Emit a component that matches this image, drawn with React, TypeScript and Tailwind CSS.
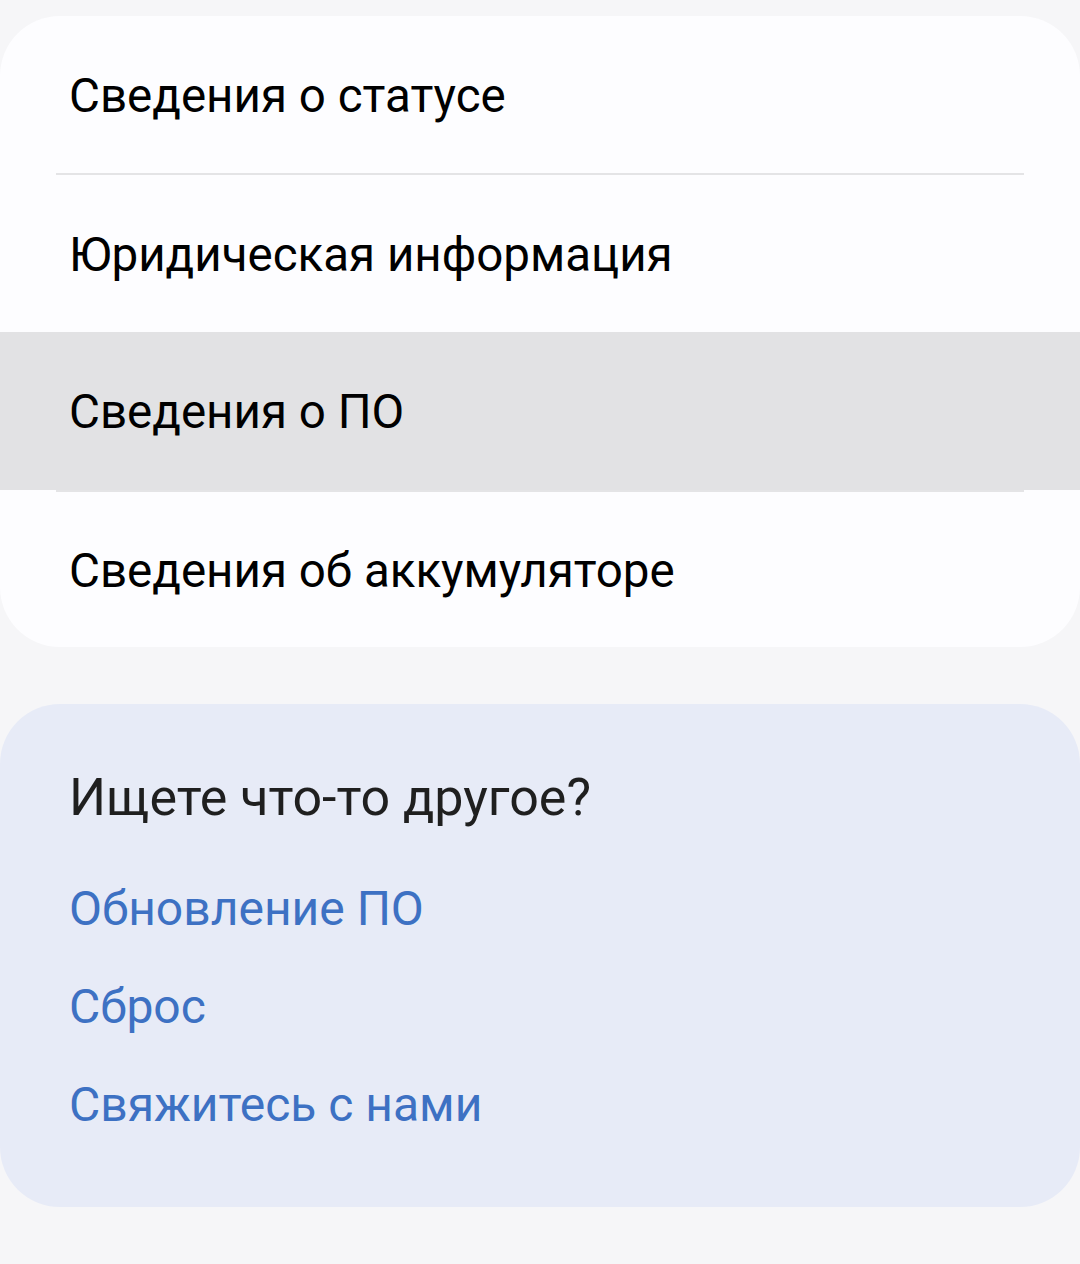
const rows = [
  "Сведения о статусе",
  "Юридическая информация",
  "Сведения о ПО",
  "Сведения об аккумуляторе",
];

const links = ["Обновление ПО", "Сброс", "Свяжитесь с нами"];

export default function App() {
  return (
    <div
      className="min-h-[1264px] w-[1080px] bg-[#f6f6f8] pt-4"
      style={{ fontFamily: "Roboto, 'Noto Sans', sans-serif" }}
    >
      <div className="overflow-hidden rounded-[60px] bg-[#fdfdff]">
        {rows.map((label, idx) => (
          <div key={idx}>
            {idx > 0 && idx !== 2 && (
              <div className="mx-14 h-[2px] bg-[#e4e4e6]" />
            )}
            <div
              className={
                idx === 2
                  ? "flex h-[158px] items-center bg-[#e2e2e4] px-[69px] pt-1"
                  : idx === 3
                    ? "flex h-[155px] items-center px-[69px] pt-1"
                    : "flex h-[157px] items-center px-[69px] pt-1"
              }
            >
              <span className="text-[47.5px] leading-none text-black">
                {label}
              </span>
            </div>
          </div>
        ))}
      </div>

      <div className="mt-[57px] flex h-[503px] flex-col rounded-[60px] bg-[#e7ebf7] px-[69px] pt-[68px]">
        <h2 className="text-[52px] leading-none text-[#1f1f1f]">
          Ищете что-то другое?
        </h2>
        <div className="mt-[61px] flex flex-col gap-[50px]">
          {links.map((l) => (
            <a key={l} className="text-[48px] leading-none text-[#3d71c3]">
              {l}
            </a>
          ))}
        </div>
      </div>
    </div>
  );
}
